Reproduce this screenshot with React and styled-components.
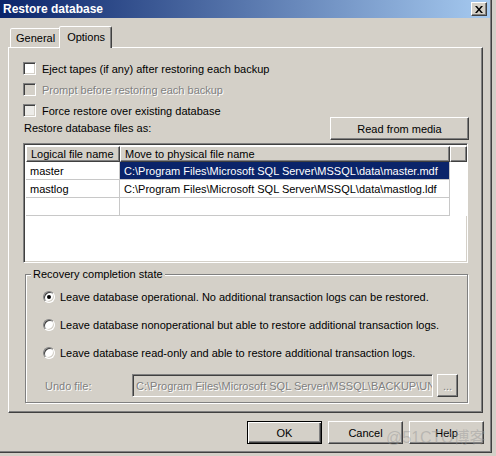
import React from "react";
import styled, { createGlobalStyle, css } from "styled-components";

const face = "#d4d0c8";

const GlobalStyle = createGlobalStyle`
  html, body { margin: 0; padding: 0; background: ${face}; }
  body {
    font-family: "Liberation Sans", Arial, sans-serif;
    font-size: 11px;
    color: #000;
  }
  * { box-sizing: border-box; }
`;

const raised = css`
  border: 1px solid;
  border-color: #fff #404040 #404040 #fff;
  box-shadow: inset -1px -1px #808080;
`;

const sunken = css`
  border: 1px solid;
  border-color: #808080 #fff #fff #808080;
  box-shadow: inset 1px 1px #404040, inset -1px -1px ${face};
`;

const disabledText = css`
  color: #808080;
  text-shadow: 1px 1px #fff;
`;

const Window = styled.div`
  position: relative;
  width: 492px;
  height: 453px;
  display: flex;
  flex-direction: column;
  background: ${face};
  border-right: 1px solid #404040;
  border-bottom: 1px solid #404040;
  box-shadow: inset -1px -1px #808080;
`;

const TitleBar = styled.div`
  height: 18px;
  margin-right: 1px;
  padding: 0 3px;
  display: flex;
  align-items: center;
  justify-content: space-between;
  background: linear-gradient(to right, #0a246a, #a6caf0);
  color: #fff;
  font-weight: bold;
  font-size: 12px;
`;

const CloseButton = styled.div`
  width: 16px;
  height: 14px;
  background: ${face};
  display: flex;
  align-items: center;
  justify-content: center;
  ${raised};
`;

const Client = styled.div`
  flex: 1;
  display: flex;
  flex-direction: column;
  padding: 8px 7px 0 8px;
`;

const TabStrip = styled.div`
  height: 21px;
  display: flex;
  align-items: flex-end;
  padding-left: 2px;
`;

const Tab = styled.div`
  position: relative;
  z-index: ${(p) => (p.$active ? 1 : 0)};
  height: ${(p) => (p.$active ? 22 : 19)}px;
  margin-bottom: ${(p) => (p.$active ? -1 : 0)}px;
  margin-left: ${(p) => (p.$active ? -2 : 0)}px;
  padding: ${(p) => (p.$active ? "0 6px 2px 7px" : "0 5px 0 5px")};
  display: flex;
  align-items: center;
  background: ${face};
  border: 1px solid;
  border-bottom: none;
  border-color: #fff #404040 transparent #fff;
  border-radius: 2px 2px 0 0;
  box-shadow: inset -1px 0 #808080;
`;

const TabPanel = styled.div`
  height: 366px;
  margin-right: 1px;
  padding: 10px 14px 0 14px;
  display: flex;
  flex-direction: column;
  ${raised};
`;

const CheckRow = styled.div`
  height: 21px;
  display: flex;
  align-items: center;
  gap: 6px;
  ${(p) => p.$disabled && disabledText};
`;

const CheckBox = styled.span`
  flex: none;
  width: 13px;
  height: 13px;
  background: ${(p) => (p.$disabled ? face : p.$soft ? "#ecebe8" : "#fff")};
  ${sunken};
`;

const FilesHeader = styled.div`
  margin-top: -4px;
  height: 23px;
  display: flex;
  justify-content: space-between;
  align-items: flex-end;
`;

const FilesLabel = styled.span`
  line-height: 13px;
  margin: 0 0 5px 1px;
`;

const Button = styled.div`
  width: ${(p) => p.$w || 75}px;
  height: 23px;
  display: flex;
  align-items: center;
  justify-content: center;
  background: ${face};
  ${raised};
  ${(p) =>
    p.$default &&
    css`
      border: 1px solid #000;
      box-shadow: inset 1px 1px #fff, inset -1px -1px #404040,
        inset -2px -2px #808080;
    `}
  ${(p) => p.$disabled && disabledText};
`;

const FileTable = styled.div`
  margin-top: 3px;
  height: 120px;
  background: #fff;
  padding: 2px;
  ${sunken};
`;

const Grid = styled.div`
  display: grid;
  grid-template-columns: 94px 330px 17px;
  grid-auto-rows: 18px;
  grid-template-rows: 16px;
`;

const HeadCell = styled.div`
  padding-left: 4px;
  display: flex;
  align-items: center;
  background: ${face};
  white-space: nowrap;
  overflow: hidden;
  ${raised};
`;

const Cell = styled.div`
  padding-left: 4px;
  display: flex;
  align-items: center;
  white-space: nowrap;
  overflow: hidden;
  border-right: 1px solid ${(p) => (p.$blank ? "transparent" : "#c8c8c8")};
  border-bottom: 1px solid ${(p) => (p.$blank ? "transparent" : "#c8c8c8")};
  background: ${(p) => (p.$selected ? "#0a246a" : "#fff")};
  color: ${(p) => (p.$selected ? "#fff" : "#000")};
`;

const GroupBox = styled.fieldset`
  margin: 5px 0 0 2px;
  padding: 0;
  min-width: 0;
  border: 1px solid #808080;
  box-shadow: inset 1px 1px #fff, 1px 1px #fff;
`;

const Legend = styled.legend`
  margin-left: 5px;
  padding: 0 2px;
  line-height: 13px;
  background: ${face};
`;

const GroupContent = styled.div`
  padding: 5px 0 5px 17px;
  display: flex;
  flex-direction: column;
  gap: 7px;
`;

const RadioRow = styled.div`
  height: 21px;
  display: flex;
  align-items: center;
  gap: 5px;
`;

const Radio = styled.span`
  flex: none;
  width: 12px;
  height: 12px;
  border-radius: 50%;
  display: flex;
  align-items: center;
  justify-content: center;
  background: #fff;
  border: 1px solid;
  border-color: #808080 #fff #fff #808080;
  box-shadow: inset 1px 1px #404040, inset -1px -1px ${face};
  &::after {
    content: "";
    width: 4px;
    height: 4px;
    border-radius: 50%;
    background: ${(p) => (p.$checked ? "#000" : "transparent")};
  }
`;

const UndoRow = styled.div`
  margin-top: 4px;
  height: 23px;
  padding-left: 2px;
  display: flex;
  align-items: center;
`;

const UndoLabel = styled.span`
  width: 87px;
  ${disabledText};
`;

const TextBox = styled.div`
  width: 301px;
  height: 23px;
  padding: 0 3px;
  display: flex;
  align-items: center;
  white-space: nowrap;
  overflow: hidden;
  background: ${face};
  ${sunken};
  ${disabledText};
`;

const Footer = styled.div`
  padding-top: 8px;
  display: flex;
  justify-content: flex-end;
  gap: 6px;
`;

const Watermark = styled.div`
  position: absolute;
  left: 386px;
  top: 424px;
  font-family: "Liberation Sans", "Noto Sans CJK SC", sans-serif;
  font-size: 16px;
  color: rgba(150, 150, 150, 0.45);
  pointer-events: none;
`;

const checks = [
  { label: "Eject tapes (if any) after restoring each backup" },
  { label: "Prompt before restoring each backup", disabled: true },
  { label: "Force restore over existing database", soft: true },
];

const files = [
  ["master", "C:\\Program Files\\Microsoft SQL Server\\MSSQL\\data\\master.mdf"],
  ["mastlog", "C:\\Program Files\\Microsoft SQL Server\\MSSQL\\data\\mastlog.ldf"],
  ["", ""],
];

const radios = [
  "Leave database operational. No additional transaction logs can be restored.",
  "Leave database nonoperational but able to restore additional transaction logs.",
  "Leave database read-only and able to restore additional transaction logs.",
];

export default function App() {
  return (
    <>
      <GlobalStyle />
      <Window>
        <TitleBar>
          <span>Restore database</span>
          <CloseButton>
            <svg width="8" height="7" viewBox="0 0 8 7">
              <path d="M0 0h2l2 2.5L6 0h2L5 3.5 8 7H6L4 4.5 2 7H0l3-3.5z" fill="#000" />
            </svg>
          </CloseButton>
        </TitleBar>
        <Client>
          <TabStrip>
            <Tab>General</Tab>
            <Tab $active>Options</Tab>
          </TabStrip>
          <TabPanel>
            {checks.map((c) => (
              <CheckRow key={c.label} $disabled={c.disabled}>
                <CheckBox $disabled={c.disabled} $soft={c.soft} />
                {c.label}
              </CheckRow>
            ))}
            <FilesHeader>
              <FilesLabel>Restore database files as:</FilesLabel>
              <Button $w={139} style={{ marginRight: -1 }}>
                Read from media
              </Button>
            </FilesHeader>
            <FileTable>
              <Grid>
                <HeadCell>Logical file name</HeadCell>
                <HeadCell>Move to physical file name</HeadCell>
                <HeadCell />
                {files.map(([name, path], i) => (
                  <React.Fragment key={i}>
                    <Cell>{name}</Cell>
                    <Cell $selected={i === 0}>{path}</Cell>
                    <Cell $blank />
                  </React.Fragment>
                ))}
              </Grid>
            </FileTable>
            <GroupBox>
              <Legend>Recovery completion state</Legend>
              <GroupContent>
                {radios.map((r, i) => (
                  <RadioRow key={r}>
                    <Radio $checked={i === 0} />
                    {r}
                  </RadioRow>
                ))}
                <UndoRow>
                  <UndoLabel>Undo file:</UndoLabel>
                  <TextBox>C:\Program Files\Microsoft SQL Server\MSSQL\BACKUP\UNDO_master.DAT</TextBox>
                  <Button $w={21} $disabled style={{ marginLeft: 4 }}>
                    ...
                  </Button>
                </UndoRow>
              </GroupContent>
            </GroupBox>
          </TabPanel>
          <Footer>
            <Button $default>OK</Button>
            <Button>Cancel</Button>
            <Button>Help</Button>
          </Footer>
        </Client>
        <Watermark>@51CTO博客</Watermark>
      </Window>
    </>
  );
}
